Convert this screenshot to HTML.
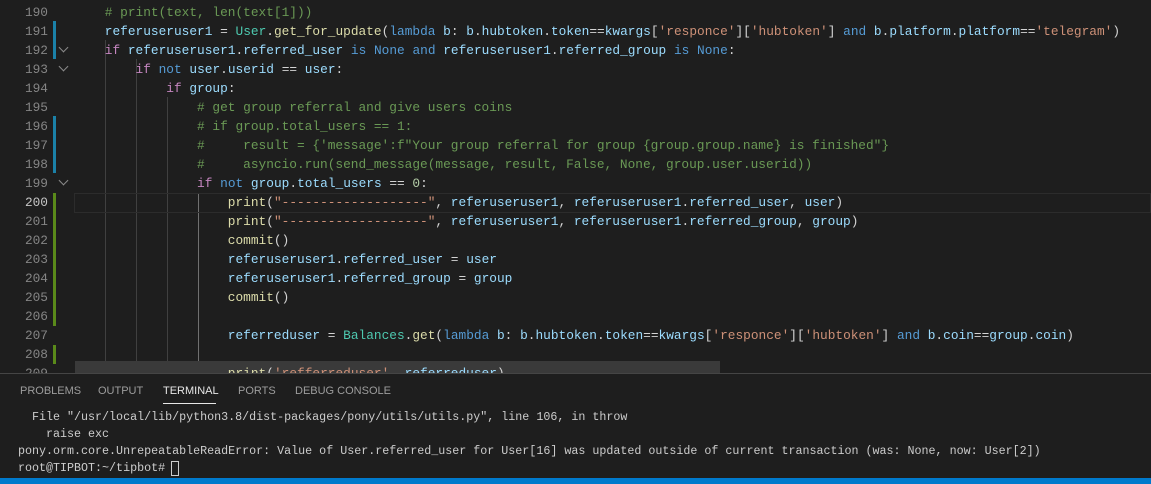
<!DOCTYPE html>
<html><head><style>
*{margin:0;padding:0;box-sizing:border-box}
body{width:1151px;height:484px;background:#1e1e1e;overflow:hidden;position:relative;font-family:"Liberation Mono",monospace}
.ln{position:absolute;left:0;width:48px;text-align:right;color:#858585;font-size:12.8px;line-height:19px}
.code{position:absolute;left:74px;font-size:12.82px;line-height:19px;white-space:pre;color:#d4d4d4}
.bar{position:absolute;left:53px;width:3px}
.g{position:absolute;width:1px;background:#404040}
.c{color:#6a9955}.k{color:#c586c0}.b{color:#569cd6}.v{color:#9cdcfe}.t{color:#4ec9b0}.f{color:#dcdcaa}.s{color:#ce9178}.n{color:#b5cea8}
.chev{position:absolute;left:60px;width:7px;height:7px;border-right:1px solid #8a8a8a;border-bottom:1px solid #8a8a8a;transform:rotate(45deg)}
.tab{position:absolute;top:385px;font-family:"Liberation Sans",sans-serif;font-size:11px;color:#9d9d9d}
.term{position:absolute;left:18px;font-size:11.68px;line-height:17px;white-space:pre;color:#cccccc}
</style></head><body>
<div class="g" style="left:105px;top:40px;height:333px"></div>
<div class="g" style="left:136px;top:59px;height:314px"></div>
<div class="g" style="left:167px;top:97px;height:276px"></div>
<div class="g" style="left:198px;top:193px;height:180px;background:#707070"></div>
<div style="position:absolute;left:74px;top:193px;width:1077px;height:20px;border:1px solid #2c2c2c"></div>
<div style="position:absolute;left:75px;top:361px;width:645px;height:12px;background:#3a3a3a"></div>
<div class="bar" style="top:21px;height:38px;background:#1b81a8"></div>
<div class="bar" style="top:116px;height:57px;background:#1b81a8"></div>
<div class="bar" style="top:193px;height:133px;background:#5a8a1a"></div>
<div class="bar" style="top:345px;height:19px;background:#5a8a1a"></div>
<div class="chev" style="top:44px"></div>
<div class="chev" style="top:63px"></div>
<div class="chev" style="top:177px"></div>
<div class="ln" style="top:3px">190<br>191<br>192<br>193<br>194<br>195<br>196<br>197<br>198<br>199<br><span style="color:#c6c6c6">200</span><br>201<br>202<br>203<br>204<br>205<br>206<br>207<br>208<br>209</div>
<div class="code" style="top:3px">    <span class="c"># print(text, len(text[1]))</span>
    <span class="v">referuseruser1</span> = <span class="t">User</span>.<span class="f">get_for_update</span>(<span class="b">lambda</span> <span class="v">b</span>: <span class="v">b</span>.<span class="v">hubtoken</span>.<span class="v">token</span>==<span class="v">kwargs</span>[<span class="s">'responce'</span>][<span class="s">'hubtoken'</span>] <span class="b">and</span> <span class="v">b</span>.<span class="v">platform</span>.<span class="v">platform</span>==<span class="s">'telegram'</span>)
    <span class="k">if</span> <span class="v">referuseruser1</span>.<span class="v">referred_user</span> <span class="b">is</span> <span class="b">None</span> <span class="b">and</span> <span class="v">referuseruser1</span>.<span class="v">referred_group</span> <span class="b">is</span> <span class="b">None</span>:
        <span class="k">if</span> <span class="b">not</span> <span class="v">user</span>.<span class="v">userid</span> == <span class="v">user</span>:
            <span class="k">if</span> <span class="v">group</span>:
                <span class="c"># get group referral and give users coins</span>
                <span class="c"># if group.total_users == 1:</span>
                <span class="c">#     result = {'message':f"Your group referral for group {group.group.name} is finished"}</span>
                <span class="c">#     asyncio.run(send_message(message, result, False, None, group.user.userid))</span>
                <span class="k">if</span> <span class="b">not</span> <span class="v">group</span>.<span class="v">total_users</span> == <span class="n">0</span>:
                    <span class="f">print</span>(<span class="s">"-------------------"</span>, <span class="v">referuseruser1</span>, <span class="v">referuseruser1</span>.<span class="v">referred_user</span>, <span class="v">user</span>)
                    <span class="f">print</span>(<span class="s">"-------------------"</span>, <span class="v">referuseruser1</span>, <span class="v">referuseruser1</span>.<span class="v">referred_group</span>, <span class="v">group</span>)
                    <span class="f">commit</span>()
                    <span class="v">referuseruser1</span>.<span class="v">referred_user</span> = <span class="v">user</span>
                    <span class="v">referuseruser1</span>.<span class="v">referred_group</span> = <span class="v">group</span>
                    <span class="f">commit</span>()

                    <span class="v">referreduser</span> = <span class="t">Balances</span>.<span class="f">get</span>(<span class="b">lambda</span> <span class="v">b</span>: <span class="v">b</span>.<span class="v">hubtoken</span>.<span class="v">token</span>==<span class="v">kwargs</span>[<span class="s">'responce'</span>][<span class="s">'hubtoken'</span>] <span class="b">and</span> <span class="v">b</span>.<span class="v">coin</span>==<span class="v">group</span>.<span class="v">coin</span>)

                    <span class="f">print</span>(<span class="s">'refferreduser'</span>, <span class="v">referreduser</span>)</div>
<div style="position:absolute;left:0;top:373px;width:1151px;height:105px;background:#1e1e1e;border-top:1px solid #454545"></div>
<div class="tab" style="left:20px">PROBLEMS</div>
<div class="tab" style="left:98px">OUTPUT</div>
<div class="tab" style="left:163px;color:#e7e7e7">TERMINAL</div>
<div style="position:absolute;left:163px;top:403px;width:53px;height:1px;background:#e7e7e7"></div>
<div class="tab" style="left:238px">PORTS</div>
<div class="tab" style="left:295px">DEBUG CONSOLE</div>
<div class="term" style="top:409px">  File "/usr/local/lib/python3.8/dist-packages/pony/utils/utils.py", line 106, in throw
    raise exc
pony.orm.core.UnrepeatableReadError: Value of User.referred_user for User[16] was updated outside of current transaction (was: None, now: User[2])
root@TIPBOT:~/tipbot# </div>
<div style="position:absolute;left:171px;top:461px;width:8px;height:15px;border:1px solid #cccccc"></div>
<div style="position:absolute;left:0;top:478px;width:1151px;height:6px;background:#007acc"></div>
</body></html>
